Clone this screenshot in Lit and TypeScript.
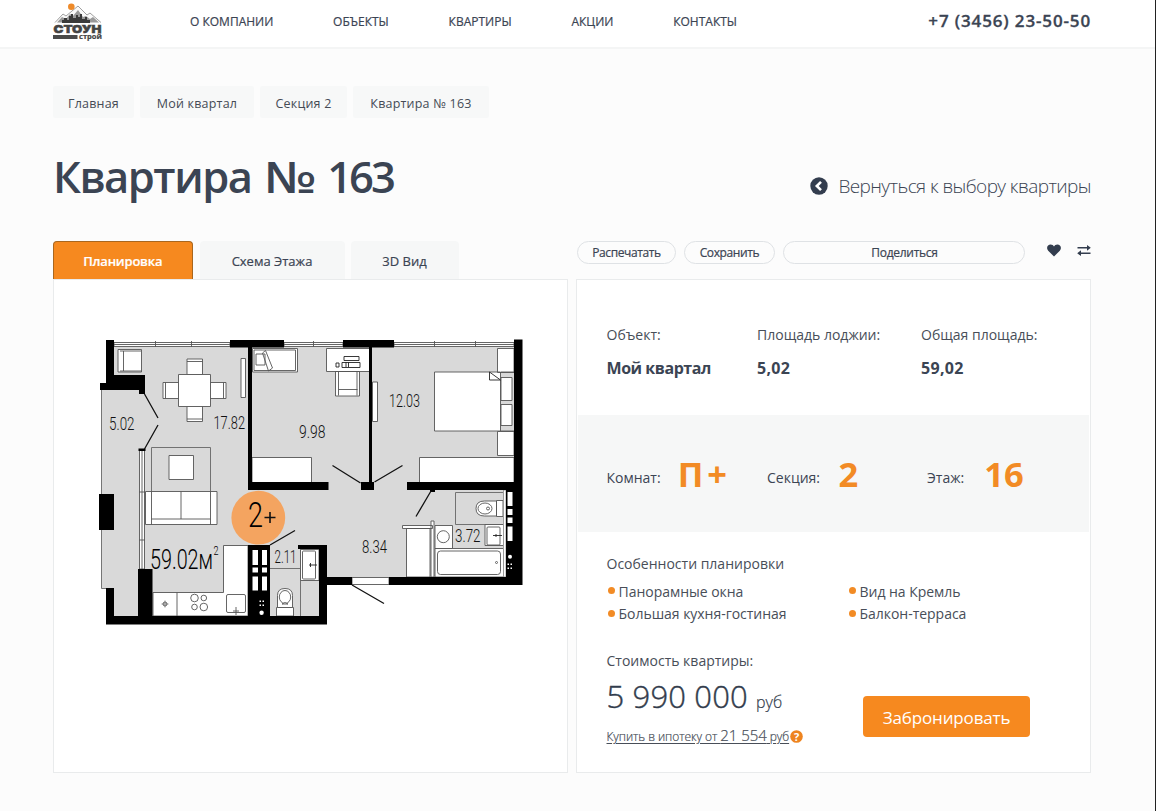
import { LitElement, html, css, svg } from "lit";
import { customElement } from "lit/decorators.js";

const FONT = css`"Open Sans", "Noto Sans", sans-serif`;

@customElement("brand-logo")
class BrandLogo extends LitElement {
  static styles = css`
    :host { display: block; width: 50px; height: 38px; }
    svg { display: block; }
    .word { font: 900 11px Inter, ${FONT}; fill: #444; stroke: #444; stroke-width: .5; }
    .sub { font: 700 7px "Open Sans", sans-serif; fill: #444; stroke: #444; stroke-width: .2; }
  `;
  render() {
    return html`<svg width="50" height="38" viewBox="53 3 50 38">
      <path d="M55 22.500 L63 14 66 16 78 6 87 15 90 13 101 22.500" fill="#fafafa" stroke="#888" stroke-width=".8"/>
      <path d="M57 22.500 L62 17 66 19 70 14 73 16 78 10 83 17 86 16 90 19 93 17 99 22.500Z" fill="#999"/>
      <path d="M62 23V20h2v-2h3v2h2v-4h2v-2h2v4h3v-3h2v2h2v-3h2v5h3v-2h2v3h3v3Z" fill="#3a3a3a"/>
      <circle cx="71.300" cy="6.800" r="3.300" fill="#ee8a2a"/>
      <text class="word" x="53.500" y="32.500" textLength="48" lengthAdjust="spacingAndGlyphs">СТОУН</text>
      <rect x="53" y="35" width="24.500" height="4" fill="#4a4a4a"/>
      <text class="sub" x="79" y="38.800" textLength="23" lengthAdjust="spacingAndGlyphs">строй</text>
    </svg>`;
  }
}

@customElement("floor-plan")
class FloorPlan extends LitElement {
  static styles = css`
    :host { display: block; }
    svg { display: block; }
    .floor { fill: #d9d9d9; }
    .wall { fill: #000; }
    .item { fill: #fff; stroke: #555; stroke-width: .9; }
    .line { fill: none; stroke: #666; stroke-width: .9; }
    .door { fill: none; stroke: #111; stroke-width: 1.3; }
    .void { fill: #fff; }
    .badge { fill: #f4a460; }
    .num { font: 300 18.500px Roboto, ${FONT}; fill: #111; }
    .area { font: 300 27.500px Roboto, ${FONT}; fill: #000; }
    .sup { font-size: 12px; }
    .type { font: 300 35px Roboto, ${FONT}; fill: #000; }
  `;
  private num(x: number, y: number, w: number, t: string) {
    return svg`<text class="num" x=${x} y=${y} textLength=${w} lengthAdjust="spacingAndGlyphs">${t}</text>`;
  }
  render() {
    return html`<svg width="445" height="300" viewBox="90 330 445 300">
      <path class="floor" d="M114 347H514V577H327V545H320V616H114V588H102V390H114Z"/>
      <path class="line" d="M101.5 390V588.5H107"/>
      <g class="item">
        <path d="M114 342.5h116v4h-116zM284 342.5h59v4h-59zM394 342.5h120v4h-120z"/>
        <path d="M114 344.5h116M284 344.5h59M394 344.5h120M155.500 341v6M191.500 341v6M313.500 341v6M434.500 341v6M475.500 341v6"/>
        <path d="M139.500 450v119h5v-119zM142 450v119M139 492h6M139 540h6"/>
        <path d="M118 349.500h23.500v22.500h-23.500zM123.500 351v20M120 351h21M120 371h21"/>
        <path d="M187 359h15.500v15.500h-15.500zM187 361.500h15.500M187 406h15.500v15.500h-15.500zM187 419h15.500M163 382.500h16v16h-16zM165.500 382.500v16M210 382.500h16v16h-16zM223.500 382.500v16"/>
        <path d="M178.500 374.500h32v32h-32z"/>
        <path d="M241 358.500h4.500v39h-4.500z"/>
        <path d="M252.500 348.500h45v23.500h-45zM254 350h41.500v20.500h-41.500zM256 354h9v11h-9zM262.500 353l3-2.500 7 17.500-4 3z"/>
        <path d="M326.500 348.500h43v23h-43zM335.500 371.500h24v24.500h-24zM338.500 371.500v24M357 371.500v24M338.500 389.500h19"/>
        <path d="M344 356.500h15v4h-15zM342 362.500h18v5h-18zM346 362v5M348.500 362v5M336 363h3v4h-3z" stroke="#222"/>
        <path d="M372.500 382h5v39.500h-5z"/>
        <path d="M497.500 348.500h16.500v24h-16.500zM497.500 431.500h16.500v24h-16.500zM501 377.500h11v23h-11zM501 404.500h11v21h-11zM434.500 372h66v59h-66z"/>
        <path d="M489.500 372v8h11z" stroke="#222"/>
        <path d="M501 372h13M501 431h13"/>
        <path d="M252 457.500h59.500v25h-59.500zM419.500 457.500h94.500v25h-94.500z"/>
      </g>
      <path class="line" d="M151.500 447.500h59v76h-59z"/>
      <g class="item">
        <path d="M169 455.500h24.500v24h-24.500z"/>
        <path d="M145.500 491.500h71.500v33h-71.500zM151.500 491.500v33M210.500 491.500v33M181 491.500v27.500M151.500 519h59"/>
        <path d="M153 592.500H223.500V545.500H248V616H153zM177 592.500V616"/>
        <circle cx="194.500" cy="598" r="3.800"/><circle cx="203.800" cy="598" r="2.800"/>
        <circle cx="194.500" cy="607" r="2.800"/><circle cx="203.800" cy="607" r="3.800"/>
        <circle cx="165" cy="604" r="2"/><path d="M161.500 604h7M165 600.500v7" stroke-width=".6"/>
        <rect x="226.500" y="594.500" width="19" height="18" rx="1.500"/><path d="M233 611h6M236 607v8"/>
      </g>
      <path class="line" d="M270 568.500h30.500M300.500 549v67"/>
      <g class="item">
        <path d="M300.500 549.500h18.500v31h-18.500z"/><rect x="302.500" y="551" width="13" height="28" rx="1"/><path d="M309 565h8M310.500 563v4" stroke="#222"/>
        <path d="M276.500 607.500h17v8.500h-17z"/><path d="M277.500 607.500v-12q0-7 7.500-7t7.500 7v12z"/><ellipse cx="285" cy="597" rx="5.700" ry="6.500"/><path d="M282 604q3-3 6 0z"/>
      </g>
      <path class="line" d="M455.500 492.500h48v32h-48z"/>
      <g class="item">
        <path d="M406.500 528.500h23.500v48.500h-23.500zM402.500 525.500h30v3h-30zM431 521h3v56h-3z"/>
        <path d="M435 525.500h17.500v23h-17.500z"/><circle cx="443.300" cy="536.700" r="6"/>
        <path d="M435 548.500h68.500v28.500h-68.500z"/><rect x="437.500" y="551" width="63" height="23.500" rx="3"/><circle cx="496.500" cy="562.500" r="1"/>
        <path d="M485 524.500h18.500v21h-18.500z"/><rect x="487" y="527" width="13" height="18" rx="1"/><path d="M493 535.500h9M496 534v3" stroke="#222"/>
        <path d="M496.500 500.500h6.500v16h-6.500zM496.500 501h-12q-8.500 0-8.500 7.500t8.500 7.500h12z"/><ellipse cx="485" cy="508.500" rx="7" ry="5.500"/><circle cx="488" cy="508.500" r="1.500"/>
        <path d="M503.500 490h2.500v87h-2.500z" stroke="#999"/>
        <path d="M352 577.500h37v7h-37z"/>
      </g>
      <path class="wall" d="M106 340h8v35h31v19h-6v-4h-39v-7h6zM230 340h54v7.500h-32V482h76.500v8H248V347.500h-18zM343 340h51v7.500h-22V482h2v8h-13v-8h8V347.500h-26zM514 339.500h8.500V585H389v-8h117V490H407v-8h107z"/>
      <path class="wall" d="M99 494h15v36H99zM106 588h8v28h24v-47h14.500v47H248v-71h22v71h49v-67h-21v-4h29v32h25v8h-25v39.500H106zM138.500 448.500h7v2.500h-7zM430 490h5v2h-5z"/>
      <path class="void" d="M252.500 550h5.500v15h-5.500zM262 550h5v15h-5zM252.500 567.500h5.500v5h-5.500zM262 567.500h5v5h-5zM252.500 576.500h5.500v14h-5.500zM262 576.500h5v14h-5zM507.500 492h5v14h-5zM507.500 509h5v6h-5zM507.500 517.500h5v5.500h-5zM507.500 526.500h5v14.500h-5z"/>
      <g class="void"><circle cx="261.600" cy="612.700" r="2.200"/><circle cx="510" cy="556.700" r="2"/>
        <path d="M259.500 600.500h1.500v1.500h-1.500zM262.500 600.500h1.500v1.500h-1.500zM259.500 604.500h1.500v1.500h-1.500zM262.500 604.500h1.500v1.500h-1.500zM507.500 563.500h1.500v1.500h-1.500zM510.500 563.500h1.500v1.500h-1.500zM507.500 567.500h1.500v1.500h-1.500zM510.500 567.500h1.500v1.500h-1.500z"/></g>
      <circle class="badge" cx="258.300" cy="517.700" r="26.900"/>
      <path class="door" d="M144.500 394l13.500 24M158 425l-13.500 24M332.500 465.500l28 17.500M374.500 482l28-16.500M431 491l-15 25.500M270 545l25-14.500M352 585l32 18.500"/>
      ${this.num(109, 430, 25.5, "5.02")}
      ${this.num(213.5, 429, 31.5, "17.82")}
      ${this.num(299, 438, 26.5, "9.98")}
      ${this.num(389, 407, 31, "12.03")}
      ${this.num(274.5, 562.5, 22, "2.11")}
      ${this.num(362, 552.5, 25, "8.34")}
      ${this.num(455, 542, 25.5, "3.72")}
      <text class="area" x="150" y="569" textLength="63" lengthAdjust="spacingAndGlyphs">59.02м</text>
      <text class="area sup" x="213.500" y="555" textLength="5" lengthAdjust="spacingAndGlyphs">2</text>
      <text class="type" x="248" y="526.500" textLength="15" lengthAdjust="spacingAndGlyphs">2</text>
      <path d="M264.500 517.500h11M270 512v11" stroke="#111" stroke-width="1.600"/>
    </svg>`;
  }
}

@customElement("app-root")
class AppRoot extends LitElement {
  static styles = css`
    :host { display: block; box-sizing: border-box; height: 811px; background: #fcfcfc; border-right: 1px solid #222; color: #3b4453; font-family: ${FONT}; overflow: hidden; }
    * { box-sizing: border-box; }
    header { height: 49px; background: #fff; border-bottom: 2px solid #f4f5f5; display: flex; padding: 3px 64px 0 53px; }
    nav { display: flex; gap: 59.800px; margin-left: 87px; padding-top: 9px; font-size: 12px; line-height: 20px; font-weight: 500; white-space: nowrap; -webkit-text-stroke: .2px #3b4453; }
    .phone { margin-left: auto; font-size: 17px; font-weight: 600; line-height: 24px; padding-top: 6px; letter-spacing: .86px; white-space: nowrap; -webkit-text-stroke: .3px #3b4453; }
    main { padding: 37px 64px 0 53px; }
    .crumbs { display: flex; gap: 6px; height: 32px; }
    .crumb { background: #f7f8f8; font-size: 12.5px; line-height: 36px; letter-spacing: .2px; text-align: center; border-radius: 2px; white-space: nowrap; color: #454b55; }
    .c1 { width: 81px; } .c2 { width: 114px; } .c3 { width: 87px; } .c4 { width: 136px; }
    .head { display: flex; justify-content: space-between; height: 123px; padding-top: 27px; white-space: nowrap; }
    h1 { margin: 0; font-size: 43.500px; line-height: 63px; font-weight: 600; letter-spacing: -1.500px; }
    .no { display: inline-block; transform: scaleX(1.17); transform-origin: left; margin: 0 10px 0 3px; }
    .digits { letter-spacing: -2.900px; }
    .back { display: flex; align-items: center; height: 30px; margin-top: 26px; gap: 10px; font-size: 19px; font-weight: 300; letter-spacing: -.58px; }
    .cols { display: grid; grid-template-columns: 515px 515px; gap: 8px; }
    .tabs { display: flex; height: 38px; }
    .tab { font-size: 13px; line-height: 41.500px; font-weight: 500; text-align: center; background: #f6f7f7; border-radius: 4px 4px 0 0; white-space: nowrap; -webkit-text-stroke: .2px currentColor; }
    .active { width: 139.500px; margin-right: 7px; background: #f6891f; color: #fff; font-weight: 600; letter-spacing: -.2px; border: 1px solid #a9671f; border-bottom: 0; line-height: 39.500px; }
    .t2 { width: 145px; margin-right: 6px; } .t3 { width: 108px; }
    .tools { display: flex; height: 38px; align-items: flex-start; padding-left: 1px; }
    .pill { height: 23px; margin-right: 8px; border: 1px solid #dfe2e5; border-radius: 12px; text-align: center; font-size: 12px; line-height: 22px; font-weight: 500; letter-spacing: -.38px; white-space: nowrap; -webkit-text-stroke: .2px #3b4453; }
    .p1 { width: 99px; } .p2 { width: 91px; } .p3 { width: 242px; }
    .pill.p3 { letter-spacing: -.28px; padding-left: 1px; }
    .heart { margin: 3px 0 0 14px; } .swap { margin: 3px 0 0 16px; }
    .panel { background: #fff; border: 1px solid #e9ebec; height: 494px; }
    .plan { padding: 50px 0 0 36px; }
    .facts { height: 135px; padding: 42.500px 0 0 29.500px; display: grid; grid-template-columns: 150.500px 164px 1fr; }
    .label, .features, .cost { font-size: 14px; line-height: 24px; color: #484e58; letter-spacing: 0; white-space: nowrap; }
    .value { font-size: 16px; line-height: 24px; font-weight: 700; margin-top: 9.500px; letter-spacing: .3px; white-space: nowrap; }
    .value.name { letter-spacing: -.45px; }
    .band { height: 117px; background: #f6f7f7; margin: 0 1px; padding: 0 0 0 28.500px; display: flex; align-items: flex-start; }
    .band div { display: flex; align-items: flex-start; line-height: 125px; white-space: nowrap; font-size: 14px; }
    .band b { color: #f28b25; font-size: 34.500px; line-height: 118px; }
    .r1 { width: 160.500px; gap: 17px; } .r1 b { letter-spacing: 4px; } .r2 { width: 160px; gap: 18.500px; } .r3 { gap: 20px; }
    .features { margin: 20px 0 0 29.500px; }
    .list { display: grid; grid-template-columns: 241px 1fr; line-height: 22.500px; margin-top: 4.500px; letter-spacing: -.03px; }
    .list span::before { content: ""; display: inline-block; width: 7px; height: 7px; border-radius: 50%; background: #f28b25; margin: 0 4px 4px 1px; vertical-align: middle; }
    .cost { display: flex; margin: 23.500px 0 0 29.500px; }
    .left { width: 256.500px; }
    .price { font-size: 31px; line-height: 39px; font-weight: 300; letter-spacing: .15px; margin-top: 4px; color: #323c4c; -webkit-text-stroke: .4px #323c4c; }
    .price small { font-size: 16px; letter-spacing: 0; -webkit-text-stroke: .2px #323c4c; }
    .loan { display: flex; align-items: center; height: 24px; margin-top: 2px; font-size: 12px; letter-spacing: -.06px; font-weight: 300; -webkit-text-stroke: .2px #484e58; }
    .loan u { text-underline-offset: 2px; margin-right: 1px; }
    .loan big { font-size: 15px; }
    button { width: 167px; height: 41px; margin-top: 47px; border: 0; border-radius: 4px; background: #f6891f; color: #fff; font: 400 17px ${FONT}; letter-spacing: -.15px; padding: 2px 0 0; }
    svg { display: block; flex: none; }
    .q { font: 700 11px ${FONT}; fill: #fff; }
  `;
  render() {
    return html`
      <header>
        <brand-logo></brand-logo>
        <nav><span>О КОМПАНИИ</span><span>ОБЪЕКТЫ</span><span>КВАРТИРЫ</span><span>АКЦИИ</span><span>КОНТАКТЫ</span></nav>
        <div class="phone">+7 (3456) 23-50-50</div>
      </header>
      <main>
        <div class="crumbs"><span class="crumb c1">Главная</span><span class="crumb c2">Мой квартал</span><span class="crumb c3">Секция 2</span><span class="crumb c4">Квартира № 163</span></div>
        <div class="head">
          <h1>Квартира <span class="no">№</span> <span class="digits">163</span></h1>
          <div class="back">
            <svg width="18" height="18" viewBox="0 0 18 18"><circle cx="9" cy="9" r="8.700" fill="#333d4e"/><path d="M11 4.800L6.800 9 11 13.200" fill="none" stroke="#fff" stroke-width="2.600"/></svg>
            <span>Вернуться к выбору квартиры</span>
          </div>
        </div>
        <div class="cols">
          <section>
            <div class="tabs"><span class="tab active">Планировка</span><span class="tab t2">Схема Этажа</span><span class="tab t3">3D Вид</span></div>
            <div class="panel plan"><floor-plan></floor-plan></div>
          </section>
          <section>
            <div class="tools">
              <span class="pill p1">Распечатать</span><span class="pill p2">Сохранить</span><span class="pill p3">Поделиться</span>
              <svg class="heart" width="14" height="13" viewBox="0 0 14 13"><path d="M7 12.500L1.200 6.700C-1.300 3.800.8.500 3.600.500 5.200.500 6.400 1.300 7 2.400 7.600 1.300 8.800.500 10.400.500c2.800 0 4.900 3.300 2.400 6.200z" fill="#333d4e"/></svg>
              <svg class="swap" width="14" height="13" viewBox="0 0 14 13"><path d="M.5 3.800h10M3.500 9.200h10" stroke="#333d4e" stroke-width="1.600"/><path d="M10 .9l3.800 2.900L10 6.700zM4 6.300L.2 9.200 4 12.100z" fill="#333d4e"/></svg>
            </div>
            <div class="panel">
              <div class="facts">
                <div><div class="label">Объект:</div><div class="value name">Мой квартал</div></div>
                <div><div class="label">Площадь лоджии:</div><div class="value">5,02</div></div>
                <div><div class="label">Общая площадь:</div><div class="value">59,02</div></div>
              </div>
              <div class="band">
                <div class="r1">Комнат:<b>П+</b></div><div class="r2">Секция:<b>2</b></div><div class="r3">Этаж:<b>16</b></div>
              </div>
              <div class="features">Особенности планировки
                <div class="list"><span>Панорамные окна</span><span>Вид на Кремль</span><span>Большая кухня-гостиная</span><span>Балкон-терраса</span></div>
              </div>
              <div class="cost">
                <div class="left">Стоимость квартиры:
                  <div class="price">5 990 000 <small>руб</small></div>
                  <div class="loan"><u>Купить в ипотеку от <big>21 554</big> руб</u><svg width="13" height="13" viewBox="0 0 13 13"><circle cx="6.500" cy="6.500" r="6.300" fill="#ee8420"/><text class="q" x="6.500" y="10.500" text-anchor="middle">?</text></svg></div>
                </div>
                <button>Забронировать</button>
              </div>
            </div>
          </section>
        </div>
      </main>`;
  }
}
